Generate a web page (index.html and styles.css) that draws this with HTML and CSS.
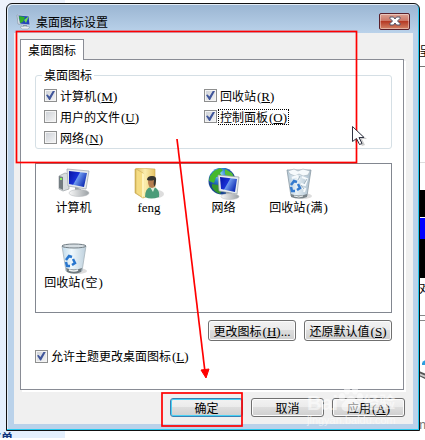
FILE: index.html
```html
<!DOCTYPE html>
<html lang="zh-CN">
<head>
    <meta charset="UTF-8">
    <meta name="viewport" content="width=device-width, initial-scale=1.0">
    <title>桌面图标设置</title>
    <link rel="stylesheet" href="styles.css">
</head>
<body>
    <div class="desktop">
        <!-- page behind the dialog -->
        <div class="sidebar"><a class="sidebar-link" href="#">下单</a></div>
        <div class="behind">
            <span class="behind-text">呈现</span>
            <div class="behind-line"></div>
            <div class="behind-space"></div>
            <div class="behind-line light"></div>
            <div class="behind-video"><div class="behind-bar"></div></div>
            <span class="behind-text">对话</span>
            <div class="behind-rule"></div>
            <svg class="behind-art" width="12" height="26" viewBox="0 0 12 26">
                <path d="M3 4Q6-1 12 2v4H3z" fill="#2c9fe0"/>
                <path d="M0 12l12 5v6L0 17z" fill="#555"/>
                <path d="M0 14l12 5v2L0 16z" fill="#ccc"/>
            </svg>
            <span class="behind-text small">ne</span>
        </div>

        <main class="window">
            <header class="titlebar">
                <svg width="16" height="16" viewBox="0 0 16 16">
                    <path d="M1 1l5 1v9l-4-1z" fill="#e4e9ee" stroke="#8795a4" stroke-width=".7"/>
                    <path d="M2 1l11 1 1 9-10-1z" fill="#2342bb" stroke="#c8d4e0" stroke-width=".8"/>
                    <path d="M3 2l6 1-2 5-3 1z" fill="#2fae28"/>
                    <path d="M8 6l5-4-3 7z" fill="#6fdc50"/>
                    <path d="M7 11h4v2H7z" fill="#8795a4"/>
                    <path d="M4 13l5-1 5 1-2 2H6z" fill="#e8edf1" stroke="#8795a4" stroke-width=".5"/>
                </svg>
                <h1 class="title">桌面图标设置</h1>
                <button class="close" aria-label="关闭">
                    <svg width="12" height="10" viewBox="0 0 12 10">
                        <path d="M1 1h3.500L6 3 7.500 1H11v1.500L8.500 5 11 7.500V9H7.500L6 7 4.500 9H1V7.500L3.500 5 1 2.500z" fill="#fff" stroke="#53566b"/>
                    </svg>
                </button>
            </header>

            <div class="content">
                <div role="tablist">
                    <button class="tab" role="tab" aria-selected="true">桌面图标</button>
                </div>
                <section class="panel">
                    <fieldset class="group">
                        <legend>桌面图标</legend>
                        <label class="check"><input type="checkbox" checked><span>计算机<i>(<u>M</u>)</i></span></label>
                        <label class="check"><input type="checkbox" checked><span>回收站<i>(<u>R</u>)</i></span></label>
                        <label class="check"><input type="checkbox"><span>用户的文件<i>(<u>U</u>)</i></span></label>
                        <label class="check focused"><input type="checkbox" checked><span>控制面板<i>(<u>O</u>)</i></span></label>
                        <label class="check"><input type="checkbox"><span>网络<i>(<u>N</u>)</i></span></label>
                    </fieldset>

                    <div class="icons">
                        <figure class="icon">
                            <svg width="32" height="32" viewBox="0 0 32 32">
                                <defs>
                                    <linearGradient id="screen" x1="0" y1="0" x2="1" y2=".5">
                                        <stop offset="0" stop-color="#0713a4"/>
                                        <stop offset=".5" stop-color="#1931d6"/>
                                        <stop offset=".55" stop-color="#6f9aee"/>
                                        <stop offset="1" stop-color="#1533b8"/>
                                    </linearGradient>
                                    <linearGradient id="metal" x1="0" x2="1">
                                        <stop offset="0" stop-color="#f8f8f8"/>
                                        <stop offset="1" stop-color="#9ba1a5"/>
                                    </linearGradient>
                                </defs>
                                <path d="M1 8l6-3 4 1v15l-6 2-4-2z" fill="#d8dddf" stroke="#999fa3" stroke-width=".7"/>
                                <path d="M1 8l4 1v13l-4-2z" fill="#737c81"/>
                                <path d="M2 11h2" stroke="#8df45d" stroke-width="2"/>
                                <path d="M9 1l22 2-3 18-18-3z" fill="#e6eaed" stroke="#9ca5ac" stroke-width=".7"/>
                                <path d="M11 3l18 2-3 14-15-3z" fill="url(#screen)"/>
                                <path d="M17 19l6 2v4h-6z" fill="#9ca2a6"/>
                                <ellipse cx="21" cy="25" rx="10" ry="3.500" fill="url(#metal)" stroke="#afb3b6" stroke-width=".5"/>
                            </svg>
                            <figcaption>计算机</figcaption>
                        </figure>
                        <figure class="icon">
                            <svg width="32" height="32" viewBox="0 0 32 32">
                                <defs>
                                    <linearGradient id="folder" x1="0" x2="1">
                                        <stop offset="0" stop-color="#d9b653"/>
                                        <stop offset=".5" stop-color="#fbeeae"/>
                                        <stop offset="1" stop-color="#e5c365"/>
                                    </linearGradient>
                                </defs>
                                <ellipse cx="24" cy="26" rx="7" ry="4" fill="#ddd"/>
                                <path d="M2 1l3-1 17 1v25l-12 4-8-5z" fill="url(#folder)" stroke="#caaa4f" stroke-width=".6"/>
                                <path d="M3 1l7 4v25l-7-5z" fill="#f5dc83" stroke="#cbae5c" stroke-width=".6"/>
                                <path d="M9 5l2 1v22l-2 2z" fill="#fff4bc"/>
                                <path d="M12 29q0-9 6-10l5 1q4 3 3 9-8 3-14 0z" fill="#4b9c79"/>
                                <path d="M17 19h5l-2 5z" fill="#ddefdc"/>
                                <ellipse cx="19" cy="14" rx="4" ry="6" fill="#b67e50"/>
                                <path d="M14 12q0-4 5-4 5 0 4 5l-1 5q-2 0-1-6-4 1-7 0z" fill="#353530"/>
                            </svg>
                            <figcaption><i>feng</i></figcaption>
                        </figure>
                        <figure class="icon">
                            <svg width="32" height="32" viewBox="0 0 32 32">
                                <defs>
                                    <radialGradient id="globe" cx=".4" cy=".25">
                                        <stop offset="0" stop-color="#a8e8ff"/>
                                        <stop offset=".5" stop-color="#2d83d5"/>
                                        <stop offset="1" stop-color="#174391"/>
                                    </radialGradient>
                                </defs>
                                <circle cx="14" cy="13" r="13.500" fill="url(#globe)"/>
                                <path d="M2 8l4-5 6-3 3 2-3 3 2 3-6 1-2 6-5-2z" fill="#44b82d"/>
                                <path d="M17 1l7 4 3 6-7-2-3-3z" fill="#56bd37"/>
                                <path d="M4 16l6 1 4 5-2 4q-6-2-8-7z" fill="#36942b"/>
                                <path d="M10 7l21 2-2 17-18-3z" fill="#e8edef" stroke="#949fa5" stroke-width=".7"/>
                                <path d="M12 9l17 2-2 13-14-3z" fill="url(#screen)"/>
                                <path d="M18 24l6 1v4h-6z" fill="#a2a8aa"/>
                                <ellipse cx="22" cy="28.500" rx="9" ry="3" fill="url(#metal)" stroke="#b4b8bb" stroke-width=".5"/>
                            </svg>
                            <figcaption>网络</figcaption>
                        </figure>
                        <figure class="icon">
                            <svg width="32" height="32" viewBox="0 0 32 32">
                                <defs>
                                    <linearGradient id="full" x1="0" x2="1">
                                        <stop offset="0" stop-color="#b4c8d6"/>
                                        <stop offset=".4" stop-color="#e6f0f6"/>
                                        <stop offset="1" stop-color="#a9bdcc"/>
                                    </linearGradient>
                                </defs>
                                <ellipse cx="20" cy="28" rx="9" ry="3" fill="#ddd"/>
                                <path d="M4 2h24l-4 26q-8 3-16 0z" fill="url(#full)" stroke="#8c9ba5" stroke-width=".8"/>
                                <path d="M5 3l6-2 4 2 5-2 7 2-2 4-5 1-4-2-4 2-5-2z" fill="#f6fafc" stroke="#a1b0ba" stroke-width=".6"/>
                                <path d="M9 10l5-2 2 4m3-3l5 2-2 6-4-1m1 4l3 1-1 3" fill="none" stroke="#f6fafc" stroke-width="2"/>
                                <path d="M17 8l-2 4m9-1l-3 5m-3 1l3 4" fill="none" stroke="#8fa5b4" stroke-width=".8"/>
                                <path d="M8 17l3-4 3 1m1 2l2 4-3 2m-2 1H9l-1-4" fill="none" stroke="#347ace" stroke-width="2.500"/>
                                <path d="M8 26q8 3 16 0v3q-8 3-16 0z" fill="#7a8489"/>
                                <path d="M11 28q5 2 9 0" fill="none" stroke="#eef2f3"/>
                            </svg>
                            <figcaption>回收站<i>(</i>满<i>)</i></figcaption>
                        </figure>
                        <figure class="icon">
                            <svg width="32" height="32" viewBox="0 0 32 32">
                                <defs>
                                    <linearGradient id="bin" x1="0" x2="1">
                                        <stop offset="0" stop-color="#bfd9ea"/>
                                        <stop offset=".4" stop-color="#eff8fc"/>
                                        <stop offset="1" stop-color="#bdd0dd"/>
                                    </linearGradient>
                                </defs>
                                <ellipse cx="20" cy="28" rx="9" ry="3" fill="#ddd"/>
                                <path d="M4 3h24l-4 25q-8 4-16 0z" fill="url(#bin)" stroke="#a6b2ba" stroke-width=".8"/>
                                <ellipse cx="16" cy="3" rx="12" ry="2" fill="#d5dde2" stroke="#737e85"/>
                                <path d="M8 17l3-4 3 1m1 2l2 4-3 2m-2 1H9l-1-4" fill="none" stroke="#2876ce" stroke-width="2.500"/>
                                <path d="M8 25q8 3 16 0l-1 4q-7 3-14 0z" fill="#6f797e"/>
                                <path d="M11 27q5 2 9 0" fill="none" stroke="#eef2f3" stroke-width="1.500"/>
                            </svg>
                            <figcaption>回收站<i>(</i>空<i>)</i></figcaption>
                        </figure>
                    </div>

                    <div class="actions">
                        <button class="btn">更改图标<i>(<u>H</u>)...</i></button>
                        <button class="btn">还原默认值<i>(<u>S</u>)</i></button>
                    </div>
                    <label class="check"><input type="checkbox" checked><span>允许主题更改桌面图标<i>(<u>L</u>)</i></span></label>
                </section>

                <footer class="footer">
                    <button class="btn default">确定</button>
                    <button class="btn">取消</button>
                    <button class="btn">应用<i>(<u>A</u>)</i></button>
                </footer>
            </div>
        </main>

        <div class="watermark">
            <div class="brand">Bai<svg width="25" height="28" viewBox="0 0 25 28">
                <g fill="#fff">
                    <ellipse cx="4" cy="12" rx="3" ry="4"/>
                    <ellipse cx="9" cy="5" rx="3" ry="4.500"/>
                    <ellipse cx="17" cy="5" rx="3" ry="4.500"/>
                    <ellipse cx="22" cy="12" rx="3" ry="4"/>
                    <path d="M13 11q3 0 6 5 5 4 2 8-2 3-8 2-7 1-9-2-2-4 3-8 3-5 6-5z"/>
                </g>
            </svg><span>经验</span></div>
            <div class="site">jingyan.baidu.com</div>
        </div>

        <!-- red marks and the pointer -->
        <svg class="marks" width="425" height="440" viewBox="0 0 425 440">
            <g fill="none" stroke="#f00" stroke-width="1.700">
                <rect x="16.500" y="31.500" width="340" height="131"/>
                <rect x="162" y="393" width="80" height="33"/>
                <path d="M177 139L205 372"/>
            </g>
            <path d="M201 370l8-1-3 9z" fill="#f00" stroke="#f00"/>
            <path d="M355 129v14l4-3 3 6 3-1-3-6h5z" fill="#000" opacity=".2"/>
            <path d="M352.500 126.500v15l4-3 3 6 2.500-1-3-6h5z" fill="#fff" stroke="#303443"/>
        </svg>
    </div>
</body>
</html>
```

FILE: styles.css
```css
* {
    box-sizing: border-box;
}
body {
    margin: 0;
    background-color: #fff;
    color: #000;
    font-family: "Noto Sans CJK SC", sans-serif;
    font-size: 12px;
    line-height: 14px;
}
button {
    font: inherit;
    color: inherit;
    padding: 0;
}
i {
    padding-left: 1px;
    font-family: "Liberation Serif", serif;
    font-size: 13px;
    font-style: normal;
    line-height: 10px;
}
svg {
    display: block;
    flex: none;
}
.desktop {
    position: relative;
    padding: 3px 5px 7px 6px;
    overflow: hidden;
}

/* page behind */
.sidebar {
    position: absolute;
    top: 0;
    bottom: 0;
    left: 0;
    width: 65px;
    display: flex;
    align-items: flex-end;
    background: linear-gradient(#eef3fc, #e3effd);
}
.sidebar-link {
    height: 7px;
    margin-left: -11px;
    color: #12347b;
    font-weight: bold;
    line-height: 14px;
    text-decoration: none;
}
.behind {
    position: absolute;
    top: 0;
    bottom: 0;
    right: 0;
    width: 6px;
    padding-top: 44px;
    overflow: hidden;
}
.behind-text {
    display: block;
    height: 22px;
    white-space: nowrap;
}
.behind-line {
    height: 1px;
    background-color: #777;
}
.behind-line.light {
    background-color: #ddd;
}
.behind-space {
    height: 95px;
}
.behind-video {
    height: 88px;
    margin: 27px 0 3px;
    padding-top: 27px;
    background-color: #000;
}
.behind-bar {
    height: 22px;
    border-top: 1px solid #fff;
    background-color: #00f;
}
.behind-rule {
    height: 6px;
    margin: 12px 0 38px;
    border: solid #888;
    border-width: 1px 0;
}
.behind-art {
    margin-bottom: 32px;
}
.behind-text.small {
    color: #777;
}

/* dialog */
.window {
    position: relative;
    padding: 0 6px 6px;
    border: 1px solid #111;
    border-radius: 6px 6px 0 0;
    background: linear-gradient(#9ab5d2, #bad2ea 29px);
    box-shadow: inset -1px -1px #25c9ef, inset 1px 1px #e3edf7;
}
.titlebar {
    display: flex;
    align-items: center;
    height: 29px;
    padding: 7px 3px 0 3px;
}
.title {
    margin: 0 auto 0 4px;
    font-size: 12px;
    font-weight: normal;
}
.close {
    display: flex;
    align-items: center;
    justify-content: center;
    width: 31px;
    height: 17px;
    margin-bottom: 2px;
    border: 1px solid #5a202b;
    border-radius: 2px;
    background: linear-gradient(#dda293, #cb7464 48%, #b63a25 50%, #d38366);
    box-shadow: inset 0 0 0 1px rgba(255, 255, 255, .4);
}
.content {
    padding: 6px 7px 7px 6px;
    margin-left: 1px;
    background-color: #f0f0f0;
}
.tab {
    display: block;
    position: relative;
    width: 64px;
    height: 21px;
    margin-bottom: -1px;
    border: 1px solid #898c95;
    border-bottom: 0;
    background-color: #fff;
    line-height: 14px;
}
.panel {
    margin-right: 2px;
    padding: 8px 11px 26px 14px;
    border: 1px solid #898c95;
    background-color: #fff;
    box-shadow: 2px 2px #fff;
}
.group {
    display: grid;
    grid-template-columns: 160px 1fr;
    grid-auto-rows: 21px;
    margin: 0;
    padding: 3px 0 0 8px;
    border: 1px solid #d5dfe5;
    border-radius: 3px;
}
.group legend {
    margin-left: -2px;
    padding: 0 2px;
}
.check {
    display: flex;
    align-items: center;
    gap: 2px;
}
.check span {
    padding: 0 1px;
}
.check input {
    appearance: none;
    flex: none;
    width: 13px;
    height: 13px;
    margin: 0;
    border: 1px solid #8e8f8f;
    background: linear-gradient(135deg, #cbcfd5, #f6f6f6);
    box-shadow: inset 0 0 0 1px #f4f4f4;
}
.check input:checked::after {
    content: "";
    display: block;
    width: 9px;
    height: 9px;
    margin: 1px;
    background-color: #40569b;
    clip-path: polygon(0 45%, 18% 38%, 38% 62%, 75% 0, 100% 0, 45% 100%, 35% 100%);
}
.check.focused span {
    outline: 1px dotted #000;
}
.icons {
    display: grid;
    grid-template-columns: repeat(auto-fill, 75px);
    grid-auto-rows: 64px;
    row-gap: 11px;
    margin-top: 14px;
    padding: 4px 0 5px;
    border: 1px solid #828790;
}
.icon {
    display: flex;
    flex-direction: column;
    align-items: center;
    margin: 0;
    white-space: nowrap;
}
.actions {
    display: flex;
    justify-content: flex-end;
    gap: 8px;
    margin: 7px 0 8px;
}
.btn {
    width: 73px;
    height: 19px;
    border: 1px solid #707070;
    border-radius: 3px;
    background: linear-gradient(#f2f2f2, #ebebeb 48%, #dddddd 50%, #cfcfcf);
    box-shadow: inset 0 0 0 1px #fcfcfc;
    line-height: 14px;
    white-space: nowrap;
}
.actions .btn {
    width: 88px;
    height: 21px;
}
.btn.default {
    border-color: #3c7fb1;
    box-shadow: inset 0 0 0 1px #48d1f5;
}
.footer {
    display: flex;
    justify-content: flex-end;
    gap: 8px;
    margin-top: 8px;
    padding-right: 1px;
}

/* overlays */
.watermark {
    position: absolute;
    right: 28px;
    bottom: 11px;
    width: 90px;
    color: #fff;
    font-family: "Liberation Sans", "Noto Sans CJK SC", sans-serif;
    opacity: .55;
    pointer-events: none;
}
.brand {
    display: flex;
    align-items: flex-end;
    font-size: 20px;
    font-weight: bold;
    line-height: 20px;
}
.brand span {
    font-size: 16px;
}
.site {
    font-size: 11px;
}
.marks {
    position: absolute;
    top: 0;
    left: 0;
    pointer-events: none;
}
```
